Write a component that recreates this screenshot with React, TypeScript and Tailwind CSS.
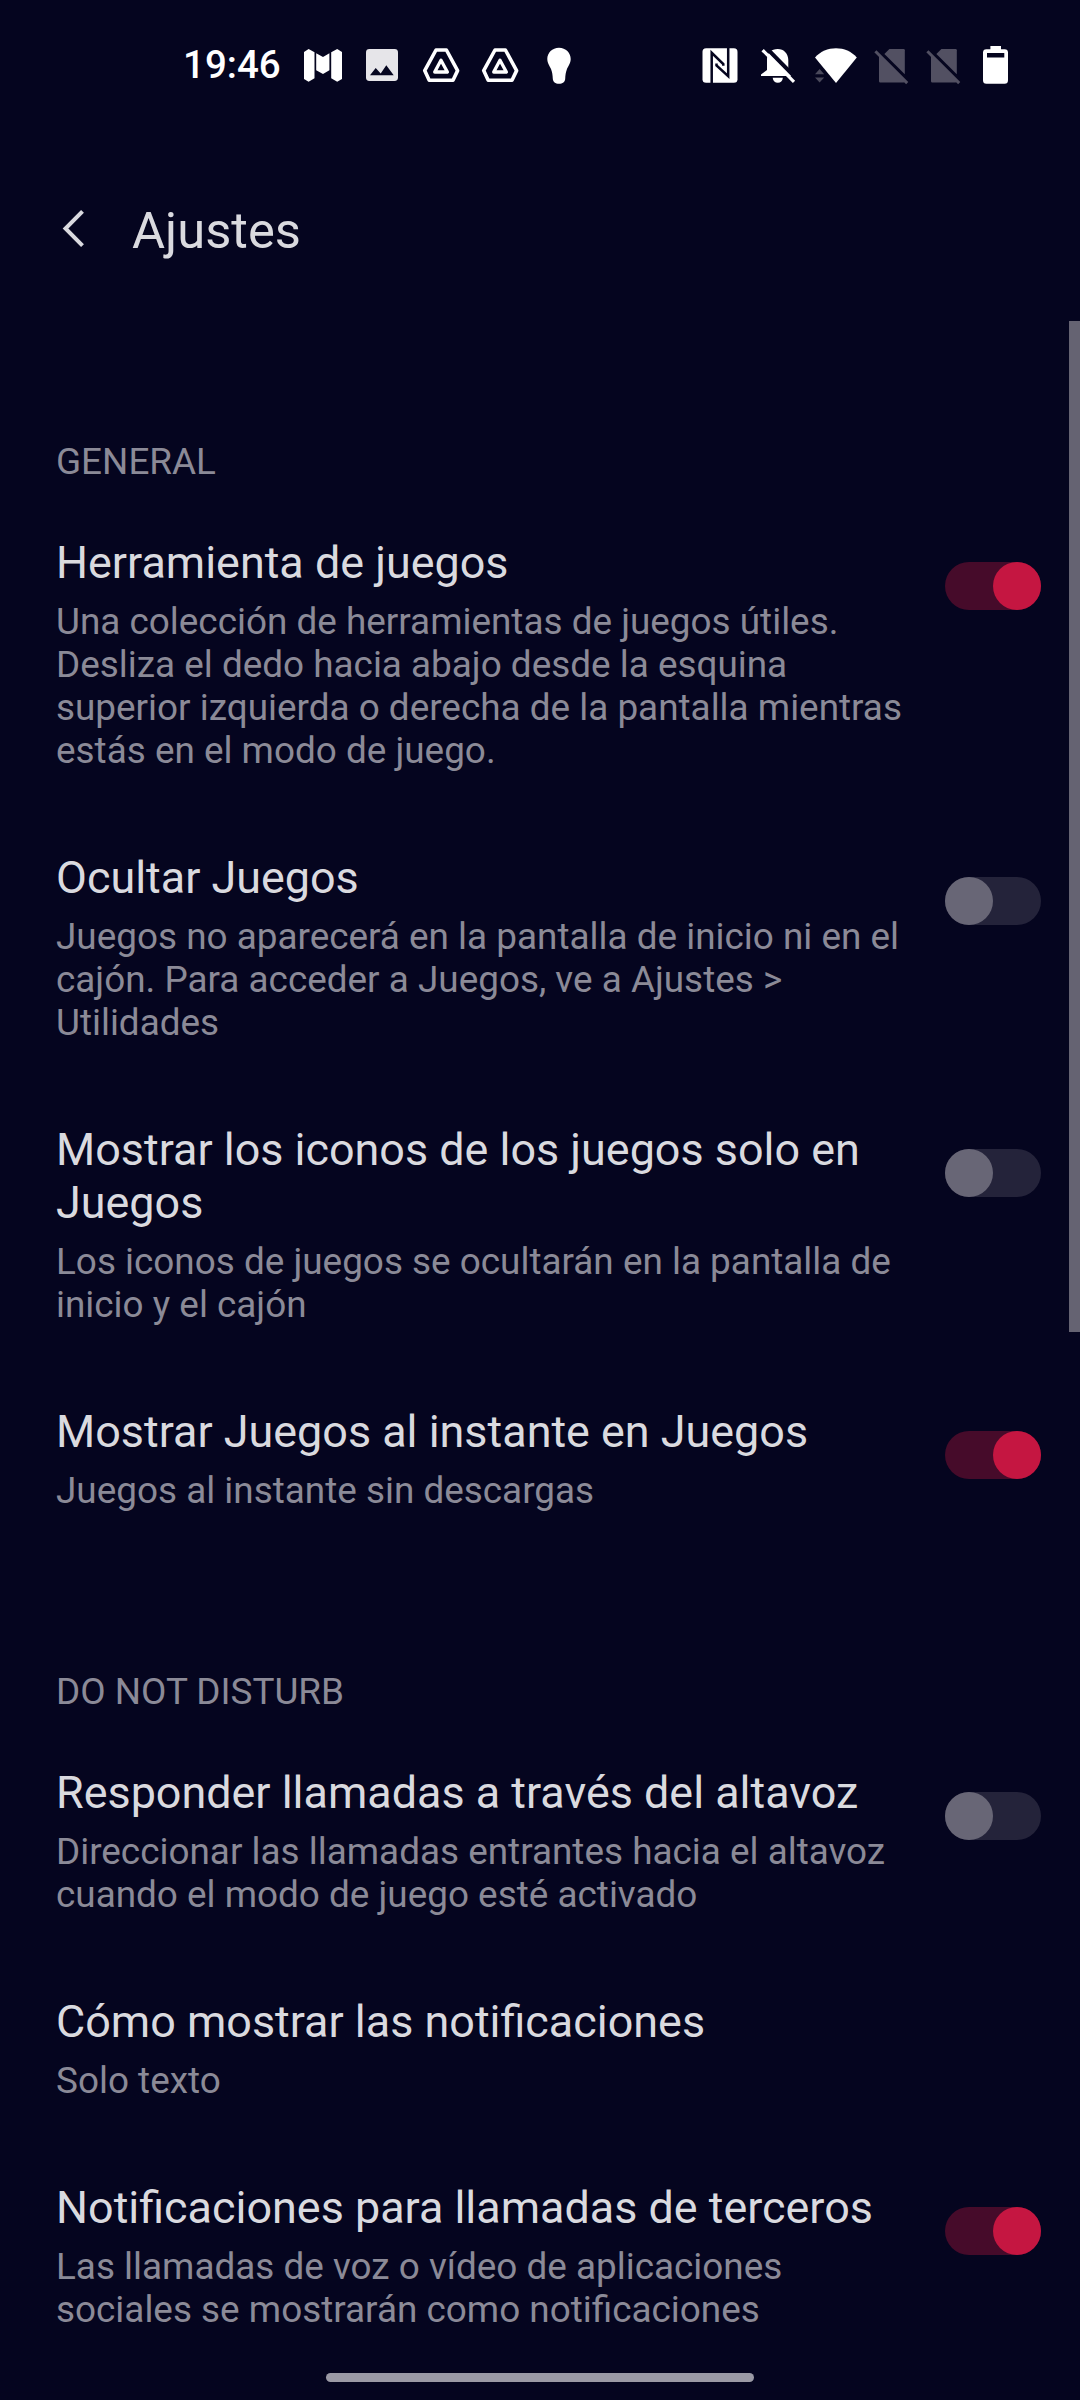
import type { ReactNode } from "react";
import clsx from "clsx";

type Setting = {
  title: string;
  detail: string;
  enabled?: boolean;
};

const sections: { heading: string; items: Setting[] }[] = [
  {
    heading: "GENERAL",
    items: [
      {
        title: "Herramienta de juegos",
        detail:
          "Una colección de herramientas de juegos útiles. Desliza el dedo hacia abajo desde la esquina superior izquierda o derecha de la pantalla mientras estás en el modo de juego.",
        enabled: true,
      },
      {
        title: "Ocultar Juegos",
        detail:
          "Juegos no aparecerá en la pantalla de inicio ni en el cajón. Para acceder a Juegos, ve a Ajustes > Utilidades",
        enabled: false,
      },
      {
        title: "Mostrar los iconos de los juegos solo en Juegos",
        detail: "Los iconos de juegos se ocultarán en la pantalla de inicio y el cajón",
        enabled: false,
      },
      {
        title: "Mostrar Juegos al instante en Juegos",
        detail: "Juegos al instante sin descargas",
        enabled: true,
      },
    ],
  },
  {
    heading: "DO NOT DISTURB",
    items: [
      {
        title: "Responder llamadas a través del altavoz",
        detail: "Direccionar las llamadas entrantes hacia el altavoz cuando el modo de juego esté activado",
        enabled: false,
      },
      {
        title: "Cómo mostrar las notificaciones",
        detail: "Solo texto",
      },
      {
        title: "Notificaciones para llamadas de terceros",
        detail: "Las llamadas de voz o vídeo de aplicaciones sociales se mostrarán como notificaciones",
        enabled: true,
      },
    ],
  },
];

function Glyph({ width, className, children }: { width: number; className?: string; children: ReactNode }) {
  return (
    <svg width={width} height={40} viewBox={`0 0 ${width} 40`} fill="currentColor" className={clsx("shrink-0", className)}>
      {children}
    </svg>
  );
}

function DriveIcon({ className }: { className?: string }) {
  return (
    <Glyph width={38} className={className}>
      <g fill="none" stroke="currentColor" strokeWidth="3.6" strokeLinejoin="round">
        <path d="M14 4h10.4l11.2 20.6-4.6 9.6H7.2L2.7 24.6Z" />
        <path d="M19 14.3l6.4 11.7H12.7Z" strokeWidth="3.3" />
      </g>
    </Glyph>
  );
}

function NoSimIcon({ className }: { className?: string }) {
  return (
    <Glyph width={36} className={clsx("text-[#525062]", className)}>
      <path d="M10.4 8l5-5H29.6q1.2 0 1.2 1.2V28.3Z" />
      <path d="M5 9.5L30.8 35.3q-.2 1.2-1.3 1.2H6.2Q5 36.5 5 35.3Z" />
      <path d="M1.4 5.3L33.2 37.1" stroke="currentColor" strokeWidth="3" />
    </Glyph>
  );
}

function StatusBar() {
  return (
    <div className="flex h-[128px] items-start pt-[46px] pl-[183px] text-white">
      <span className="mt-[-1px] w-[120px] text-[38.5px] font-medium leading-[40px]">19:46</span>

      {/* Notifications */}
      <Glyph width={39}>
        <path d="M1 6l4.6-3L11.5 6.3V32.3L5.6 35.8 1 33Z" />
        <path d="M13.2 7.3L20 11l6.4-3.7V24.3L20 28l-6.8-3.7Z" />
        <path d="M28.2 6.3L34.2 3 39 6V33l-4.8 2.8-6-3.5Z" />
      </Glyph>
      <Glyph width={32} className="ml-[24px] text-[#e6e5e9]">
        <rect y="3" width="32" height="32" rx="3.4" />
        <path d="M4 29.3L9.7 22l5 5.4L20.3 19.3l7.4 10Z" fill="#05051f" />
      </Glyph>
      <DriveIcon className="ml-[24px]" />
      <DriveIcon className="ml-[21px]" />
      <Glyph width={26} className="ml-[27px]">
        <path d="M13 1.8C19.8 1.8 24.7 6.9 24.7 13c0 4.5-2.5 7-3.8 10.2-1.1 3-1.6 6-1.7 9.6 0 3.1-2.6 5-6.2 5s-6.1-1.9-6.2-5c-.1-3.6-.6-6.6-1.7-9.6C3.8 20 1.3 17.5 1.3 13 1.3 6.9 6.2 1.8 13 1.8Z" />
      </Glyph>

      {/* System */}
      <Glyph width={36} className="ml-[130px]">
        <rect x=".5" y="2.2" width="35" height="34.6" rx="3.6" />
        <g fill="none" stroke="#05051f" strokeWidth="2.5">
          <path d="M9.7 37V6.8L21.3 18v1.8" />
          <path d="M26.2 2V30.2L14.5 19.4V17.6" />
        </g>
      </Glyph>
      <Glyph width={36} className="ml-[23px]">
        <path d="M16.7 3C23 3 27.3 7.8 27.3 14V25l7 5H0v-1.4L6 24V13C6 7 10.4 3 16.7 3Z" />
        <path d="M11.7 31.7h10.2c-.4 3.3-2.3 5-5.1 5s-4.7-1.7-5.1-5Z" />
        <path d="M4.5 1L36 33.2" stroke="#05051f" strokeWidth="4" />
        <path d="M1.6 4.2L33 35.9" stroke="currentColor" strokeWidth="3.2" />
      </Glyph>
      <Glyph width={42} className="ml-[18px]">
        <path d="M0 28.2l4.6-5.1 4.6 5.1ZM0 31.6h9.2l-4.6 5Z" fill="#4a495b" />
        <path d="M0 11.4C5.6 5.3 12.8 2.2 21 2.2s15.2 3.1 20.8 9.2L21 37Z" />
      </Glyph>
      <NoSimIcon className="ml-[17px]" />
      <NoSimIcon className="ml-[16px]" />
      <Glyph width={25} className="ml-[21px]">
        <path
          fillRule="evenodd"
          d="M7.4 0H18v3.2h3.6Q25 3.2 25 6.6v27.6q0 3.5-3.4 3.5H3.4Q0 37.7 0 34.2V6.6Q0 3.2 3.4 3.2h4ZM4 7v4.4h17.3V7Z"
        />
      </Glyph>
    </div>
  );
}

function Toggle({ on }: { on: boolean }) {
  return (
    <div
      role="switch"
      aria-checked={on}
      className={clsx("mt-[26px] flex h-12 w-24 shrink-0 rounded-full", on ? "justify-end bg-[#460b2a]" : "bg-[#24233a]")}
    >
      <div className={clsx("size-12 rounded-full", on ? "bg-[#c51641]" : "bg-[#686676]")} />
    </div>
  );
}

function SettingRow({ title, detail, enabled }: Setting) {
  return (
    <div className="flex items-start justify-between">
      <div className="w-[858px]">
        <h3 className="text-[44.9px] leading-[53px] text-[#dadadf]">{title}</h3>
        <p className="mt-[11px] text-[36.88px] leading-[43px] text-[#8b8a97]">{detail}</p>
      </div>
      {enabled !== undefined && <Toggle on={enabled} />}
    </div>
  );
}

export default function App() {
  return (
    <div className="relative h-[2400px] w-[1080px] overflow-hidden bg-[#05051f] font-['Roboto',sans-serif]">
      <StatusBar />

      <header className="flex h-[193px] items-start pt-[73px] pl-[60px]">
        <svg width="72" height="60" viewBox="0 0 72 60" fill="none" stroke="#dadadf" strokeWidth="4" className="shrink-0">
          <path d="M22.5 10.3L5.5 27.5l17 17.2" />
        </svg>
        <h1 className="text-[50.7px] leading-[60px] text-[#dadadf]">Ajustes</h1>
      </header>

      <main className="flex flex-col gap-[158px] pt-[119px] pr-[39px] pl-[56px]">
        {sections.map((section) => (
          <section key={section.heading}>
            <h2 className="mb-[53px] text-[36.88px] leading-[43px] text-[#8b8a97]">{section.heading}</h2>
            <div className="flex flex-col gap-[79px]">
              {section.items.map((item) => (
                <SettingRow key={item.title} {...item} />
              ))}
            </div>
          </section>
        ))}
      </main>

      {/* Scroll thumb and gesture bar float over the list */}
      <div className="absolute top-[321px] right-0 h-[1011px] w-[11px] bg-[#656372]" />
      <div className="absolute bottom-[18px] left-[326px] h-[9px] w-[428px] rounded-full bg-[#9b9aa5]" />
    </div>
  );
}
